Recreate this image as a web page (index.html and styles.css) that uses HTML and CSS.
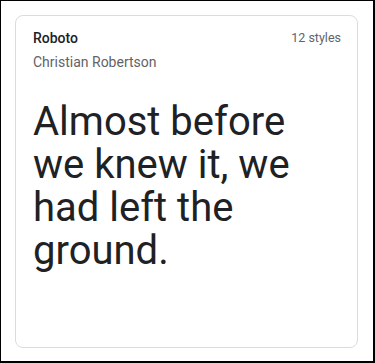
FILE: index.html
```html
<!DOCTYPE html>
<html>
<head>
<meta charset="utf-8">
<link rel="stylesheet" href="styles.css">
</head>
<body>
<div class="frame">
  <div class="card">
    <div class="head">
      <div class="names">
        <div class="family">Roboto</div>
        <div class="designer">Christian Robertson</div>
      </div>
      <div class="styles">12 styles</div>
    </div>
    <p class="sample">Almost before we knew it, we had left the ground.</p>
  </div>
</div>
</body>
</html>
```
FILE: styles.css
```css
* { box-sizing: border-box; }
html, body { margin: 0; padding: 0; background: #fff; }
body { font-family: Roboto, "Noto Sans", sans-serif; }
.frame {
  width: 375px;
  height: 363px;
  border: 2px solid #000;
  border-top-width: 1px;
  border-left-width: 1px;
  padding: 14px 15px 13px 14px;
}
.card {
  height: 100%;
  border: 1px solid #dadce0;
  border-radius: 8px;
  padding: 12px 16px 0 17px;
}
.head {
  display: flex;
  justify-content: space-between;
  align-items: flex-start;
}
.family {
  font-size: 14px;
  line-height: 20px;
  font-weight: 500;
  color: #202124;
}
.designer {
  margin-top: 4px;
  font-size: 14px;
  line-height: 20px;
  color: #5f6368;
}
.styles {
  font-size: 12.5px;
  line-height: 20px;
  color: #5f6368;
}
.sample {
  margin: 28px 0 0;
  font-size: 40px;
  line-height: 43px;
  color: #202124;
}
```
